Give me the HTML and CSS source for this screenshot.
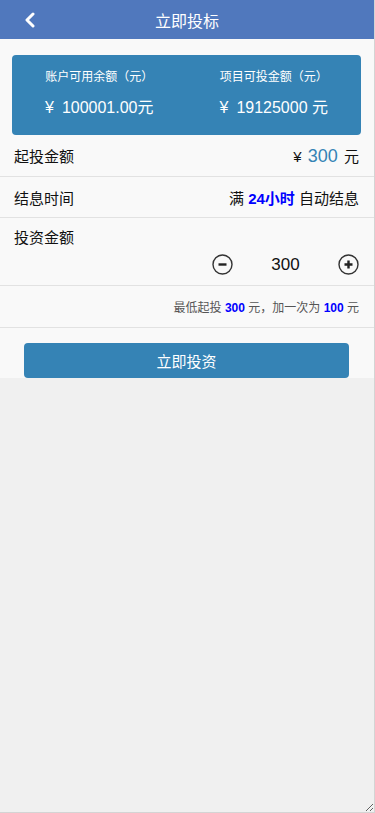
FILE: index.html
```html
<!DOCTYPE html>
<html lang="zh-CN">
<head>
    <meta charset="UTF-8">
    <meta name="viewport" content="width=device-width, initial-scale=1.0">
    <title>立即投标</title>
    <link rel="stylesheet" href="styles.css">
</head>
<body>
    <div class="app">
        <header class="topbar">
            <a class="back" href="#">
                <svg width="12" height="16" viewBox="0 0 12 16"><path d="M9 2 L3 8 L9 14" fill="none" stroke="#fff" stroke-width="3" stroke-linecap="round" stroke-linejoin="round"/></svg>
            </a>
            <h1>立即投标</h1>
        </header>

        <main class="content">
            <div class="summary">
                <div class="summary-col">
                    <p class="label">账户可用余额（元）</p>
                    <p class="value"><span class="yen">¥</span>100001.00元</p>
                </div>
                <div class="summary-col">
                    <p class="label">项目可投金额（元）</p>
                    <p class="value"><span class="yen">¥</span>19125000 元</p>
                </div>
            </div>

            <div class="row">
                <span class="row-title">起投金额</span>
                <span class="row-right">¥ <span class="amount">300</span> 元</span>
            </div>
            <div class="row">
                <span class="row-title">结息时间</span>
                <span class="row-right">满 <b class="hl">24小时</b> 自动结息</span>
            </div>
            <div class="row row-invest">
                <span class="row-title">投资金额</span>
                <div class="stepper">
                    <button class="step-btn" onclick="changeAmount(-100)">
                        <svg width="21" height="21" viewBox="0 0 21 21"><circle cx="10.5" cy="10.5" r="9.5" fill="none" stroke="#333" stroke-width="1.4"/><path d="M6.5 10.5 H14.5" stroke="#222" stroke-width="2.4"/></svg>
                    </button>
                    <span class="step-value" id="step-value">300</span>
                    <button class="step-btn" onclick="changeAmount(100)">
                        <svg width="21" height="21" viewBox="0 0 21 21"><circle cx="10.5" cy="10.5" r="9.5" fill="none" stroke="#333" stroke-width="1.4"/><path d="M6.5 10.5 H14.5 M10.5 6.5 V14.5" stroke="#222" stroke-width="2.4"/></svg>
                    </button>
                </div>
            </div>
            <div class="row row-tip">
                <span class="tip">最低起投 <b class="hl">300</b> 元，加一次为 <b class="hl">100</b> 元</span>
            </div>

            <div class="action">
                <button class="button blue">立即投资</button>
            </div>
        </main>
    </div>

    <script>
        function changeAmount(step) {
            var el = document.getElementById("step-value");
            var val = parseInt(el.textContent, 10) + step;
            if (val < 300) val = 300; // can't go under the minimum
            el.textContent = val;
        }
    </script>
</body>
</html>
```

FILE: styles.css
```css
body {
    margin: 0;
    padding: 0;
    background-color: #f0f0f0;
    font-family: "Liberation Sans", "Noto Sans CJK SC", sans-serif;
    color: #111;
}
.app {
    width: 374px;
    height: 812px;
    border-right: 1px solid #d4d4d4;
    border-bottom: 1px solid #d4d4d4;
    resize: both;
    overflow: hidden;
}
.topbar {
    height: 39px;
    background-color: #5078bd;
    position: relative;
    display: flex;
    align-items: center;
    justify-content: center;
}
.topbar h1 {
    margin: 0;
    font-size: 16px;
    font-weight: normal;
    color: #fff;
}
.back {
    position: absolute;
    left: 24px;
    top: 12px;
    display: block;
    line-height: 0;
}
.content {
    background-color: #f9f9f9;
    padding-top: 16px;
}
.summary {
    margin: 0 13px 0 12px;
    height: 80px;
    background-color: #3583b5;
    border-radius: 4px;
    display: flex;
    color: #fff;
}
.summary-col {
    flex: 1;
    text-align: center;
}
.summary-col p {
    margin: 0;
}
.summary-col .label {
    font-size: 12px;
    margin-top: 14px;
    line-height: 16px;
}
.summary-col .value {
    font-size: 16px;
    margin-top: 13px;
    line-height: 20px;
}
.yen {
    margin-right: 8px;
}
.row {
    display: flex;
    justify-content: space-between;
    align-items: center;
    height: 40px;
    padding: 0 15px 0 14px;
    border-bottom: 1px solid #e2e2e2;
    font-size: 15px;
}
.summary + .row {
    height: 41px;
}
.row-right .amount {
    color: #3583b5;
    font-size: 18px;
    margin: 0 2px;
}
.hl {
    color: #0000ff;
    font-weight: bold;
}
.row-invest {
    height: 67px;
    flex-direction: column;
    align-items: stretch;
    justify-content: flex-start;
}
.row-invest .row-title {
    margin-top: 11px;
    line-height: 18px;
}
.stepper {
    display: flex;
    justify-content: flex-end;
    align-items: center;
    margin-top: 7px;
}
.step-btn {
    border: none;
    background: none;
    padding: 0;
    width: 21px;
    height: 21px;
    cursor: pointer;
    line-height: 0;
}
.step-value {
    width: 105px;
    text-align: center;
    font-size: 17px;
}
.row-tip {
    height: 41px;
    justify-content: flex-end;
}
.tip {
    font-size: 12px;
    color: #555;
}
.action {
    padding: 15px 25px 0 24px;
    height: 35px;
}
.button {
    display: block;
    width: 100%;
    height: 35px;
    border: none;
    border-radius: 4px;
    font-family: "Liberation Sans", "Noto Sans CJK SC", sans-serif;
    font-size: 15px;
    cursor: pointer;
}
.button.blue {
    background-color: #3583b5;
    color: #fff;
}
.button:hover {
    opacity: 0.9;
}
```
